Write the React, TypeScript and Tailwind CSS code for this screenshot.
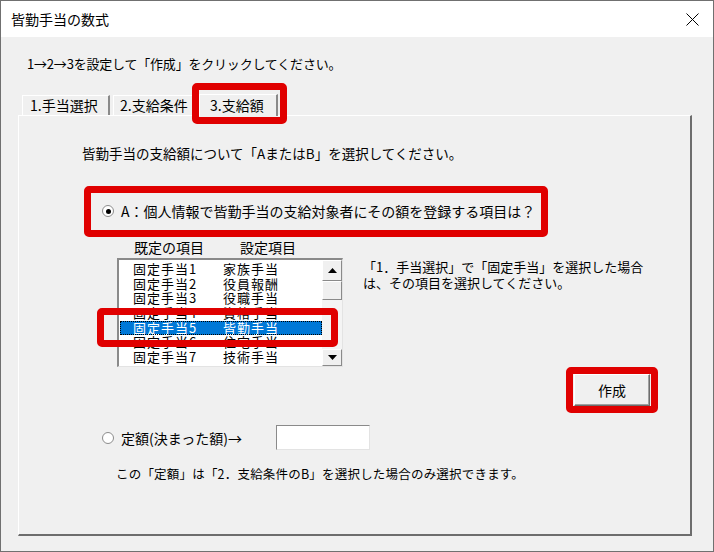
import React from 'react'

const rows: [string, string][] = [
  ['固定手当1', '家族手当'],
  ['固定手当2', '役員報酬'],
  ['固定手当3', '役職手当'],
  ['固定手当4', '資格手当'],
  ['固定手当5', '皆勤手当'],
  ['固定手当6', '住宅手当'],
  ['固定手当7', '技術手当'],
]

function Radio({ checked }: { checked?: boolean }) {
  return (
    <span className="w-[12px] h-[12px] rounded-full border border-[#8c8c8c] bg-white flex items-center justify-center shrink-0">
      {checked && <span className="w-[5px] h-[5px] rounded-full bg-black" />}
    </span>
  )
}

function Arrow({ up }: { up?: boolean }) {
  return (
    <svg width="9" height="5" viewBox="0 0 9 5">
      {up ? <polygon points="4.5,0 9,5 0,5" fill="#000" /> : <polygon points="0,0 9,0 4.5,5" fill="#000" />}
    </svg>
  )
}

export default function App() {
  return (
    <div className="relative w-[714px] h-[552px] overflow-hidden border border-[#707070] bg-[#f0f0f0] text-black font-['Noto_Sans_CJK_JP',sans-serif]">
      {/* title bar */}
      <div className="h-[36px] bg-white flex items-center justify-between pl-[10px] pr-[14px]">
        <span className="text-[14px] leading-[18px]">皆勤手当の数式</span>
        <svg width="13" height="13" viewBox="0 0 13 13">
          <path d="M0.5 0.5 L12.5 12.5 M12.5 0.5 L0.5 12.5" stroke="#000" strokeWidth="1" />
        </svg>
      </div>

      <div className="pl-[26px] pt-[18px] text-[13px] leading-[18px] tracking-[-0.2px]">
        1→2→3を設定して「作成」をクリックしてください。
      </div>

      <div className="ml-[17px] mt-[20px]">
        {/* tabs */}
        <div className="flex items-end h-[22px] pl-[4px] text-[14px]">
          <div className="w-[88px] h-[20px] border-t border-l border-white border-r-2 border-r-[#8a8a8a] pl-[7px] leading-[19px]">1.手当選択</div>
          <div className="ml-[3px] w-[84px] h-[20px] border-t border-l border-white border-r border-r-[#8a8a8a] pl-[6px] leading-[19px]">2.支給条件</div>
          <div className="ml-[2px] w-[79px] h-[22px] border-t border-l border-white border-r-2 border-r-[#8a8a8a] pl-[10px] leading-[20px] relative z-10 bg-[#f0f0f0] mb-[-1px]">3.支給額</div>
        </div>

        {/* panel */}
        <div className="w-[674px] h-[421px] border-t border-l border-white border-r-2 border-b-2 border-r-[#6d6d6d] border-b-[#6d6d6d] flex flex-col">
          <div className="mt-[28px] ml-[63px] text-[13.5px] leading-[18px]">
            皆勤手当の支給額について「AまたはB」を選択してください。
          </div>

          <div className="mt-[40px] ml-[83px] h-[18px] flex items-center gap-[7px]">
            <Radio checked />
            <span className="text-[14px] leading-[18px]">A：個人情報で皆勤手当の支給対象者にその額を登録する項目は？</span>
          </div>

          <div className="mt-[18px] ml-[115px] h-[18px] flex text-[14px] leading-[18px]">
            <span className="w-[106px]">既定の項目</span>
            <span>設定項目</span>
          </div>

          <div className="mt-[2px] ml-[98px] flex items-start">
            <div className="w-[226px] h-[109px] bg-white border-t-2 border-l-2 border-t-[#8a8a8a] border-l-[#8a8a8a] border-b border-r border-b-[#e3e3e3] border-r-[#e3e3e3] flex overflow-hidden">
              <div className="flex-1 pt-[2px] pl-[1px] text-[13px] tracking-[1px]">
                {rows.map(([a, b], i) => (
                  <div
                    key={a}
                    className={`h-[14.67px] leading-[14.67px] flex pl-[13px] ${i === 4 ? 'bg-[#0078d7] text-white outline outline-1 outline-dotted outline-black -outline-offset-1' : ''}`}
                  >
                    <span className="w-[90px]">{a}</span>
                    <span>{b}</span>
                  </div>
                ))}
              </div>
              <div className="w-[20px] flex flex-col bg-[#f4f4f4]">
                <div className="h-[21px] bg-[#f0f0f0] border-t border-l border-white border-b border-r border-b-[#8a8a8a] border-r-[#8a8a8a] flex items-center justify-center">
                  <Arrow up />
                </div>
                <div className="h-[19px] bg-[#f0f0f0] border-t border-l border-white border-b border-r border-b-[#8a8a8a] border-r-[#8a8a8a]" />
                <div className="flex-1" />
                <div className="h-[17px] bg-[#f0f0f0] border-t border-l border-white border-b border-r border-b-[#8a8a8a] border-r-[#8a8a8a] flex items-center justify-center">
                  <Arrow />
                </div>
              </div>
            </div>
            <div className="ml-[20px] mt-[1px] text-[13px] leading-[16px]">
              <div>「1．手当選択」で「固定手当」を選択した場合</div>
              <div>は、その項目を選択してください。</div>
            </div>
          </div>

          <div className="mt-[7px] ml-[555px]">
            <button className="w-[76px] h-[32px] bg-[#f0f0f0] border border-t-white border-l-white border-b-[#6d6d6d] border-r-[#6d6d6d] shadow-[inset_-1px_-1px_#a0a0a0] text-[14px] leading-[18px]">
              作成
            </button>
          </div>

          <div className="mt-[19px] ml-[83px] h-[25px] flex items-center">
            <Radio />
            <span className="ml-[7px] w-[155px] text-[14px] leading-[18px]">定額(決まった額)→</span>
            <div className="w-[94px] h-[25px] bg-white border-t border-l border-t-[#8a8a8a] border-l-[#8a8a8a] border-b border-r border-b-[#e3e3e3] border-r-[#e3e3e3]" />
          </div>

          <div className="mt-[15px] ml-[97px] text-[12.5px] leading-[18px] tracking-[0.2px]">
            この「定額」は「2．支給条件のB」を選択した場合のみ選択できます。
          </div>
        </div>
      </div>

      {/* red highlight annotations */}
      <div className="absolute left-[191px] top-[82px] w-[95px] h-[41px] border-[7px] border-[#e00000] rounded-[5px] z-20" />
      <div className="absolute left-[83px] top-[185px] w-[464px] h-[51px] border-[7px] border-[#e00000] rounded-[5px] z-20" />
      <div className="absolute left-[96px] top-[307px] w-[241px] h-[39px] border-[7px] border-[#e00000] rounded-[5px] z-20" />
      <div className="absolute left-[565px] top-[366px] w-[92px] h-[46px] border-[7px] border-[#e00000] rounded-[5px] z-20" />
    </div>
  )
}
